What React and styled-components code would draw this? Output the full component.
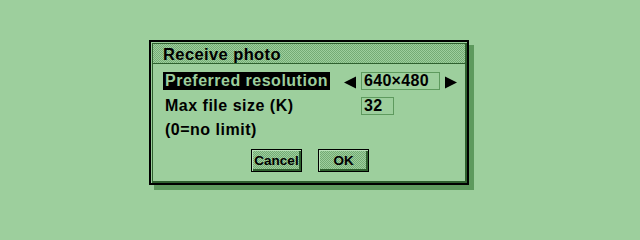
/**
* Receive photo dialog
*
*/
import React from "react";
import styled, { createGlobalStyle } from "styled-components";

/**
* Page defaults
*/
const GlobalStyle = createGlobalStyle`
	html, body {
		margin: 0;
		padding: 0;
		background: #9dcf9d;
	}
	* {
		box-sizing: border-box;
	}
`;

/**
* The screen
*/
const Screen = styled.div`
	width: 640px;
	height: 240px;
	padding: 40px 0 0 149px;
	background: #9dcf9d;
	font-family: "Liberation Sans", Arial, sans-serif;
	font-weight: 700;
	color: #000;
	overflow: hidden;
`;

/**
* The dialog outer frame
*/
const Dialog = styled.div`
	width: 320px;
	height: 145px;
	border: 2px solid #000;
	background: #9dcf9d;
	box-shadow: 5px 5px 0 #5e9a5e;
	display: flex;
`;

/**
* The inner frame line
*/
const Inner = styled.div`
	flex: 1;
	margin: 1px 0 0 1px;
	border-style: solid;
	border-color: #2f612f;
	border-width: 1px 2px 2px 1px;
	display: flex;
	flex-direction: column;
`;

/**
* The checkered title bar
*/
const TitleBar = styled.div`
	height: 20px;
	padding: 1px 0 0 10px;
	border-bottom: 1px solid #2f612f;
	background: repeating-conic-gradient(#74ab74 0 25%, #9dcf9d 0 50%) 0 0 / 2px 2px;
	font-size: 16.5px;
	line-height: 18px;
	letter-spacing: 0.4px;
`;

/**
* The dialog body
*/
const Body = styled.div`
	flex: 1;
	padding: 8px 0 0 10px;
	display: flex;
	flex-direction: column;
`;

/**
* One line of the form
*/
const Row = styled.div`
	display: flex;
	align-items: center;
	height: 18px;
	margin-top: ${props => props.gap || 0}px;
`;

/**
* The label column
*/
const LabelCell = styled.div`
	width: 181px;
	height: 18px;
	flex-shrink: 0;
`;

/**
* The label text
*/
const Label = styled.span`
	display: inline-block;
	height: 18px;
	padding: 0 2px;
	font-size: 16px;
	line-height: 18px;
	letter-spacing: 0.5px;
	white-space: nowrap;
	background: ${props => props.selected ? "#000" : "transparent"};
	color: ${props => props.selected ? "#9dcf9d" : "#000"};
`;

/**
* The arrow slot around a value
*/
const ArrowSlot = styled.div`
	width: 17px;
	height: 18px;
	display: flex;
	align-items: center;
	justify-content: ${props => props.right ? "flex-end" : "flex-start"};
	padding-top: 2px;
	flex-shrink: 0;
`;

/**
* The value field
*/
const Field = styled.div`
	width: ${props => props.width}px;
	height: 18px;
	border: 1px solid #5e9a5e;
	padding-left: 2px;
	font-size: 16px;
	line-height: 16px;
	letter-spacing: 0.3px;
	white-space: nowrap;
`;

/**
* The row of buttons
*/
const Buttons = styled.div`
	display: flex;
	justify-content: center;
	gap: 16px;
	padding-right: 8px;
	margin-top: 10px;
`;

/**
* A dialog button
*/
const Button = styled.div`
	width: 51px;
	height: 23px;
	border: 1px solid #000;
	background: repeating-conic-gradient(#74ab74 0 25%, #9dcf9d 0 50%) 0 0 / 2px 2px;
	box-shadow: inset 1px 1px 0 #b9e2b9, inset -2px -2px 0 #2f612f;
	display: flex;
	align-items: center;
	justify-content: center;
	font-size: 13.5px;
	line-height: 21px;
	padding-bottom: 1px;
`;

/**
* Left / right triangles
*/
const Arrow = ({ dir }) => (
	<svg width="13" height="13" viewBox="0 0 13 13" style={{ display: "block", flexShrink: 0 }}>
		{dir === "left"
			? <polygon points="12,0.5 12,12.5 0,6.5" fill="#000" />
			: <polygon points="1,0.5 1,12.5 13,6.5" fill="#000" />}
	</svg>
);

/**
* The main component
*/
export default function App() {
	return (
		<Screen>
			<GlobalStyle />
			<Dialog>
				<Inner>
					<TitleBar>Receive photo</TitleBar>
					<Body>
						<Row>
							<LabelCell>
								<Label selected>Preferred resolution</Label>
							</LabelCell>
							<ArrowSlot>
								<Arrow dir="left" />
							</ArrowSlot>
							<Field width={79}>640×480</Field>
							<ArrowSlot right>
								<Arrow dir="right" />
							</ArrowSlot>
						</Row>
						<Row gap={7}>
							<LabelCell>
								<Label>Max file size (K)</Label>
							</LabelCell>
							<ArrowSlot />
							<Field width={33}>32</Field>
						</Row>
						<Row gap={6}>
							<LabelCell>
								<Label>(0=no limit)</Label>
							</LabelCell>
						</Row>
						<Buttons>
							<Button>Cancel</Button>
							<Button>OK</Button>
						</Buttons>
					</Body>
				</Inner>
			</Dialog>
		</Screen>
	);
}
